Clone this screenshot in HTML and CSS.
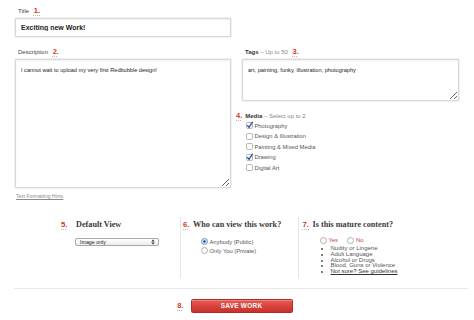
FILE: index.html
```html
<!DOCTYPE html>
<html>
<head>
<meta charset="utf-8">
<link rel="stylesheet" href="styles.css">
</head>
<body>
<div class="page">
  <div class="fields">
    <div class="field title-field">
      <div class="label">Title <span class="num">1.</span></div>
      <input class="text-input" type="text" value="Exciting new Work!">
    </div>
    <div class="field desc-field">
      <div class="label">Description <span class="num">2.</span></div>
      <textarea class="text-area desc-area">I cannot wait to upload my very first Redbubble design!</textarea>
      <a class="hint">Text Formatting Hints</a>
    </div>
    <div class="field tags-field">
      <div class="label"><b>Tags</b> <span class="sub">– Up to 50</span> <span class="num">3.</span></div>
      <textarea class="text-area tags-area">art, painting, funky, illustration, photography</textarea>
      <div class="label media-label"><span class="num">4.</span><b>Media</b>&nbsp;<span class="sub">– Select up to 2</span></div>
      <ul class="checks">
        <li><svg class="box" width="7" height="7" viewBox="0 0 7 7"><rect x="0.5" y="0.5" width="6" height="6" rx="1.3" fill="#fff" stroke="#a5a5a5" stroke-width="0.8"/><path d="M1.6 3.6 L3 5.4 L6.4 0.2" fill="none" stroke="#2a54a3" stroke-width="1.3" stroke-linecap="round" stroke-linejoin="round"/></svg>Photography</li>
        <li><svg class="box" width="7" height="7" viewBox="0 0 7 7"><rect x="0.5" y="0.5" width="6" height="6" rx="1.3" fill="#fff" stroke="#a5a5a5" stroke-width="0.8"/></svg>Design &amp; Illustration</li>
        <li><svg class="box" width="7" height="7" viewBox="0 0 7 7"><rect x="0.5" y="0.5" width="6" height="6" rx="1.3" fill="#fff" stroke="#a5a5a5" stroke-width="0.8"/></svg>Painting &amp; Mixed Media</li>
        <li><svg class="box" width="7" height="7" viewBox="0 0 7 7"><rect x="0.5" y="0.5" width="6" height="6" rx="1.3" fill="#fff" stroke="#a5a5a5" stroke-width="0.8"/><path d="M1.6 3.6 L3 5.4 L6.4 0.2" fill="none" stroke="#2a54a3" stroke-width="1.3" stroke-linecap="round" stroke-linejoin="round"/></svg>Drawing</li>
        <li><svg class="box" width="7" height="7" viewBox="0 0 7 7"><rect x="0.5" y="0.5" width="6" height="6" rx="1.3" fill="#fff" stroke="#a5a5a5" stroke-width="0.8"/></svg>Digital Art</li>
      </ul>
    </div>
  </div>

  <div class="options">
    <div class="opt opt-view">
      <div class="heading"><span class="num">5.</span><span class="htext">Default View</span></div>
      <div class="select"><span>Image only</span><svg width="4" height="6" viewBox="0 0 4 6"><path d="M0.3 2.4 L2 0.4 L3.7 2.4 Z M0.3 3.6 L2 5.6 L3.7 3.6 Z" fill="#333"/></svg></div>
    </div>
    <div class="opt opt-who">
      <div class="heading"><span class="num">6.</span><span class="htext">Who can view this work?</span></div>
      <ul class="radios">
        <li><svg class="radio" width="7" height="7" viewBox="0 0 7 7"><circle cx="3.5" cy="3.5" r="3" fill="#dce8f8" stroke="#5b83c4" stroke-width="0.8"/><circle cx="3.5" cy="3.5" r="1.3" fill="#1f4f9e"/></svg>Anybody (Public)</li>
        <li><svg class="radio" width="7" height="7" viewBox="0 0 7 7"><circle cx="3.5" cy="3.5" r="3" fill="#fff" stroke="#9a9a9a" stroke-width="0.8"/></svg>Only You (Private)</li>
      </ul>
    </div>
    <div class="opt opt-mature">
      <div class="heading"><span class="num">7.</span><span class="htext">Is this mature content?</span></div>
      <div class="yesno">
        <span class="yn"><svg class="radio" width="7" height="7" viewBox="0 0 7 7"><circle cx="3.5" cy="3.5" r="3" fill="#fff" stroke="#9a9a9a" stroke-width="0.8"/></svg>Yes</span>
        <span class="yn"><svg class="radio" width="7" height="7" viewBox="0 0 7 7"><circle cx="3.5" cy="3.5" r="3" fill="#fff" stroke="#9a9a9a" stroke-width="0.8"/></svg>No</span>
      </div>
      <ul class="mature-list">
        <li>Nudity or Lingerie</li>
        <li>Adult Language</li>
        <li>Alcohol or Drugs</li>
        <li>Blood, Guns or Violence</li>
        <li><a class="guide">Not sure? See guidelines</a></li>
      </ul>
    </div>
  </div>

  <div class="rule"></div>

  <div class="actions">
    <span class="num act-num">8.</span>
    <button class="save" type="button">SAVE WORK</button>
  </div>
</div>
</body>
</html>
```

FILE: styles.css
```css
html, body {
  margin: 0;
  padding: 0;
  background: #fff;
}

body {
  font-family: "Liberation Sans", Arial, sans-serif;
  color: #333;
  width: 474px;
}

.page {
  padding: 6px 6px 0 15px;
}

.fields {
  display: grid;
  grid-template-columns: 216px 217px;
  column-gap: 11px;
  row-gap: 10px;
  grid-template-areas:
    "title ."
    "desc tags";
}

.title-field { grid-area: title; }
.desc-field { grid-area: desc; }
.tags-field { grid-area: tags; }

.field {
  display: flex;
  flex-direction: column;
}

.label {
  font-size: 6px;
  line-height: 10px;
  height: 10px;
  color: #444;
  padding-left: 3px;
  margin-bottom: 2px;
  white-space: nowrap;
}

.label b {
  font-weight: bold;
  color: #333;
}

.label .sub {
  color: #888;
}

.num {
  font-family: "Liberation Sans", Arial, sans-serif;
  font-weight: bold;
  font-size: 7.5px;
  line-height: 1;
  color: #d5372c;
  text-decoration: underline dotted #b8b8b8;
  text-underline-offset: 1.5px;
  margin-left: 3px;
}

.text-input,
.text-area {
  box-sizing: border-box;
  margin: 0;
  width: 100%;
  border: 1px solid #d9d9d9;
  border-radius: 1px;
  box-shadow: 0 0 0 1px #f0f0f0, inset 0 1px 2px rgba(0, 0, 0, 0.06);
  background: #fff;
  font-family: "Liberation Sans", Arial, sans-serif;
  color: #222;
  outline: none;
}

.text-input {
  height: 19px;
  padding: 0 5px;
  font-size: 7px;
  font-weight: bold;
}

.text-area {
  font-size: 5.6px;
  line-height: 8px;
  padding: 6px 5px;
  resize: both;
}

.desc-area {
  height: 129px;
}

.tags-area {
  height: 42px;
  padding-top: 6px;
}

.hint {
  display: block;
  font-size: 5px;
  line-height: 8px;
  margin-top: 4px;
  padding-left: 1px;
  color: #8a8a8a;
  text-decoration: underline;
}

.media-label {
  margin-top: 9.5px;
  margin-bottom: 0;
  margin-left: -6px;
  padding-left: 0;
}

.media-label .num {
  margin-left: 0;
  margin-right: 3px;
}

.checks {
  list-style: none;
  margin: 0;
  padding: 0 0 0 4px;
}

.checks li {
  display: flex;
  align-items: center;
  gap: 1.5px;
  height: 10.5px;
  font-size: 5.8px;
  color: #555;
}

.box, .radio {
  display: block;
  flex: none;
  overflow: visible;
}

/* bottom options */
.options {
  display: grid;
  grid-template-columns: 165px 118px 1fr;
  margin-top: 17px;
  height: 61px;
}

.opt {
  padding-top: 3px;
  box-sizing: border-box;
}

.opt-who,
.opt-mature {
  border-left: 1px solid #e6e6e6;
}

.opt-view { padding-left: 46px; }
.opt-who { padding-left: 2px; }
.opt-mature { padding-left: 3.5px; }

.heading {
  display: flex;
  align-items: baseline;
  gap: 3.5px;
  line-height: 10px;
  height: 10px;
  white-space: nowrap;
}

.opt-view .heading { gap: 8.5px; }

.heading .num {
  margin-left: 0;
  font-size: 7.8px;
}

.htext {
  font-family: "Liberation Serif", "Times New Roman", serif;
  font-weight: bold;
  font-size: 8.2px;
  color: #3a3a3a;
}

.select {
  margin: 8px 0 0 14px;
  width: 84px;
  height: 8px;
  box-sizing: border-box;
  border: 1px solid #a8a8a8;
  border-radius: 2px;
  background: linear-gradient(#ffffff, #ececec);
  display: flex;
  align-items: center;
  justify-content: space-between;
  padding: 0 3px 0 4px;
  font-size: 5.3px;
  color: #222;
}

.radios {
  list-style: none;
  margin: 7px 0 0;
  padding: 0 0 0 18px;
}

.radios li {
  display: flex;
  align-items: center;
  gap: 1.5px;
  height: 9px;
  font-size: 5.8px;
  color: #555;
}

.yesno {
  display: flex;
  gap: 9px;
  margin-top: 5.8px;
  height: 9px;
  align-items: center;
  padding-left: 17px;
}

.yn {
  display: flex;
  align-items: center;
  gap: 2px;
  font-size: 5.8px;
  color: #c0463e;
}

.mature-list {
  margin: 1.3px 0 0;
  padding: 0 0 0 28px;
  font-size: 6px;
  line-height: 5.8px;
  color: #555;
}

.guide {
  color: #333;
  text-decoration: underline;
}

.rule {
  height: 1px;
  background: #e8e8e8;
  margin: 10px 0 0 -1px;
}

.actions {
  display: grid;
  grid-template-columns: 1fr auto 1fr;
  align-items: center;
  margin-top: 9.5px;
}

.act-num {
  justify-self: end;
  margin-right: 7px;
}

.save {
  grid-column: 2;
  width: 102px;
  height: 14px;
  margin: 0;
  padding: 0;
  border: 1px solid #b02b25;
  border-radius: 1.5px;
  background: linear-gradient(#e85a53, #c9302a);
  box-shadow: inset 0 1px 0 rgba(255, 255, 255, 0.25);
  color: #fff;
  font-family: "Liberation Sans", Arial, sans-serif;
  font-weight: bold;
  font-size: 6.4px;
  letter-spacing: 0.3px;
  text-shadow: 0 -0.5px 0 rgba(0, 0, 0, 0.2);
}
```
